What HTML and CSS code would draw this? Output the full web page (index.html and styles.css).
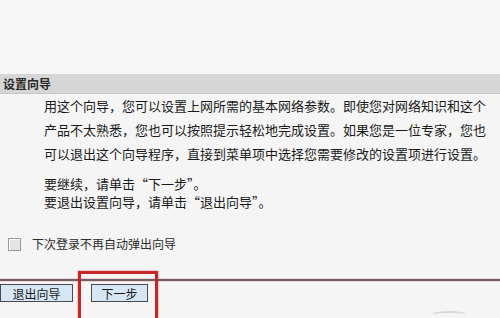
FILE: index.html
```html
<!DOCTYPE html>
<html lang="zh">
<head>
    <meta charset="UTF-8">
    <title>设置向导</title>
    <link rel="stylesheet" href="styles.css">
</head>
<body>
    <div class="top"></div>
    <div class="bar">设置向导</div>
    <div class="content">
        <p class="intro">
            <span class="line">用这个向导，您可以设置上网所需的基本网络参数。即使您对网络知识和这个</span>
            <span class="line">产品不太熟悉，您也可以按照提示轻松地完成设置。如果您是一位专家，您也</span>
            <span class="line">可以退出这个向导程序，直接到菜单项中选择您需要修改的设置项进行设置。</span>
        </p>
        <p class="hint">
            <span class="line">要继续，请单击“下一步”。</span>
            <span class="line">要退出设置向导，请单击“退出向导”。</span>
        </p>
    </div>
    <label class="option">
        <span class="check"></span>
        <span>下次登录不再自动弹出向导</span>
    </label>
    <div class="rule"></div>
    <div class="buttons">
        <button class="btn btn-exit">退出向导</button>
        <button class="btn btn-next">下一步</button>
    </div>
    <div class="mark"></div>
    <div class="swoosh"></div>
</body>
</html>
```

FILE: styles.css
```css
body {
    margin: 0;
    width: 500px;
    height: 318px;
    overflow: hidden;
    position: relative;
    background-color: #f5f5f5;
    color: #1a1a1a;
    font-family: "Noto Sans CJK SC", "Liberation Sans", sans-serif;
}
.top {
    height: 74px;
    background-color: #f6f6f6;
}
.bar {
    height: 19px;
    line-height: 19px;
    padding-left: 3px;
    font-size: 12px;
    font-weight: bold;
    color: #2a2a2a;
    background-color: #d6d6d6;
    border-bottom: 1px solid #c8c8c8;
}
.content {
    padding-left: 44px;
}
.line {
    display: block;
    white-space: nowrap;
}
.intro {
    margin: 0;
    font-size: 13px;
    line-height: 24px;
}
.hint {
    margin: 0;
    padding-top: 9px;
    font-size: 13px;
    line-height: 18px;
}
.option {
    display: flex;
    align-items: center;
    gap: 11px;
    height: 14px;
    margin-top: 26px;
    padding-left: 8px;
    font-size: 12px;
    line-height: 14px;
    color: #2a2a2a;
}
.check {
    width: 11px;
    height: 11px;
    border: 1px solid #9a9a9a;
    background-color: #e4e4e4;
    box-shadow: inset 1px 1px 0 #fff;
}
.rule {
    margin-top: 28px;
    height: 2px;
    background-color: #6a6262;
    box-shadow: 0 -1px 0 #f4d2d8, 0 1px 0 #f4d2d8;
}
.buttons {
    display: flex;
    gap: 18px;
    margin-top: 3px;
}
.btn {
    height: 18px;
    padding: 0;
    border: 1px solid #4a4a4a;
    background-color: #d6e6f4;
    font-family: "Noto Sans CJK SC", sans-serif;
    font-size: 12px;
    line-height: 15px;
    color: #1a1a1a;
}
.btn-exit {
    width: 73px;
}
.btn-next {
    width: 57px;
}
.mark {
    position: absolute;
    left: 78px;
    top: 271px;
    width: 74px;
    height: 44px;
    border: 3px solid #c4262a;
    border-bottom: none;
    box-shadow: 0 0 2px rgba(196, 38, 42, 0.6);
}
.swoosh {
    position: absolute;
    left: 432px;
    top: 311px;
    width: 34px;
    height: 5px;
    border-radius: 50% 50% 0 0;
    border-top: 2px solid #d8d8d8;
}
```
